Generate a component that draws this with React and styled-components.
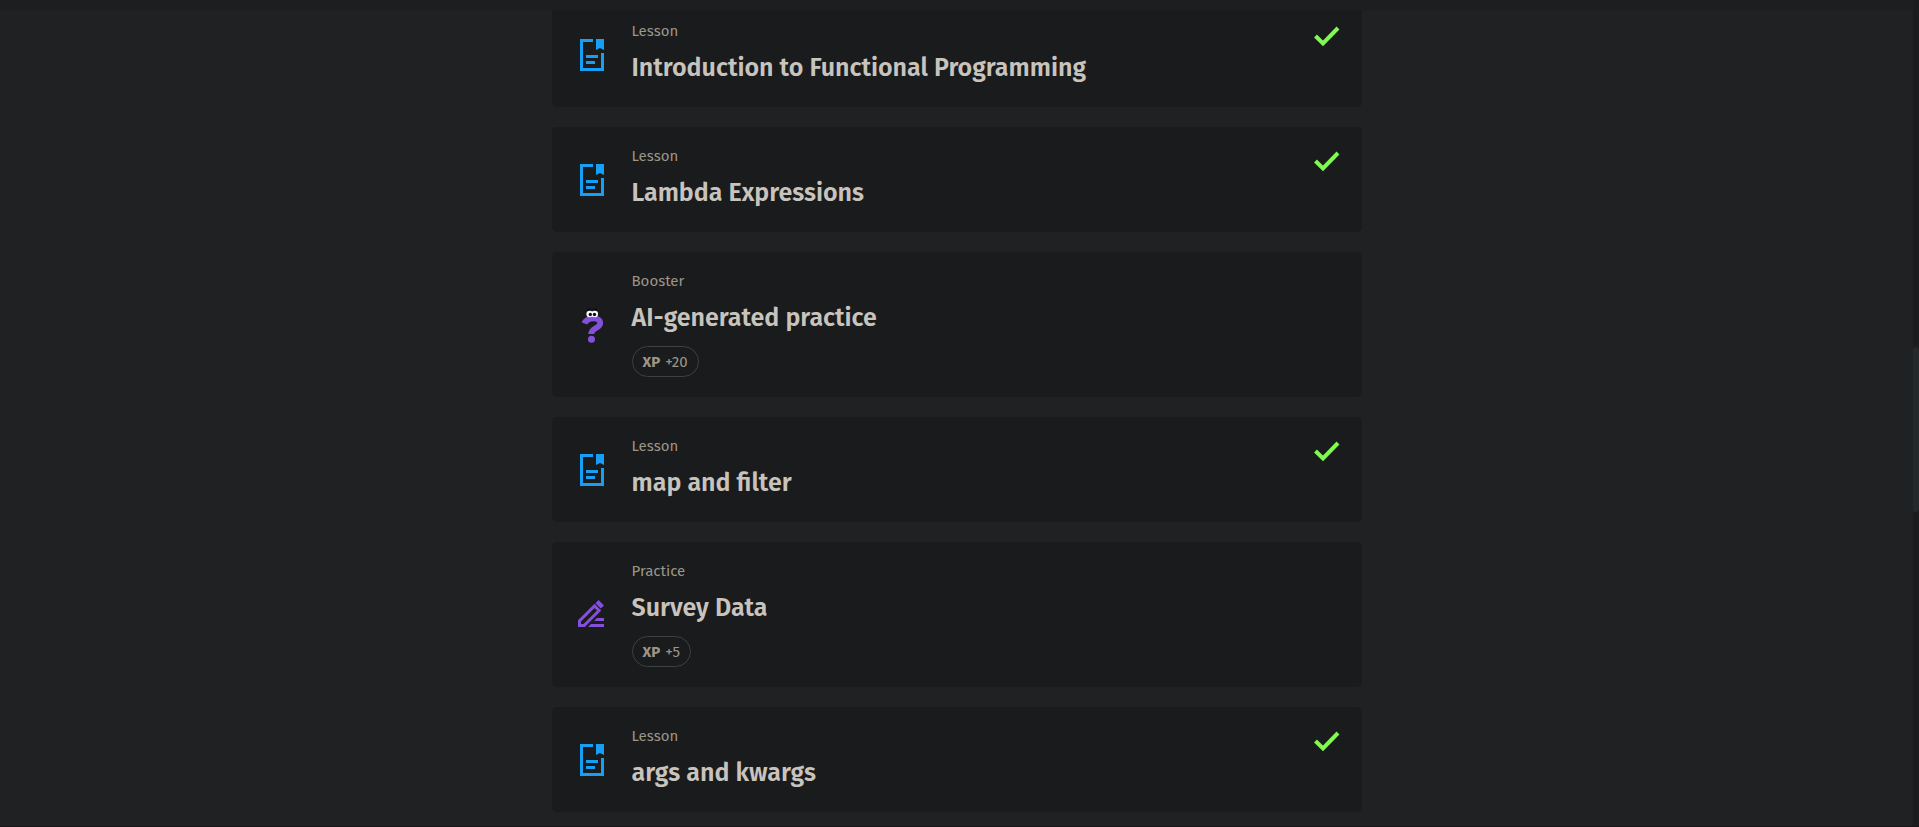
import React from "react";
import styled, { createGlobalStyle } from "styled-components";

const GlobalStyle = createGlobalStyle`
  * { box-sizing: border-box; }
  html, body, #root { height: 100%; }
  body {
    margin: 0;
    overflow: hidden;
    background: #1f2123;
    color: #c8c3bc;
    font-family: "Fira Sans", "Noto Sans", sans-serif;
  }
`;

const Page = styled.div`
  position: relative;
  height: 100vh;
  overflow: hidden;
  border-bottom: 1px solid #181516;
`;

const TopBar = styled.header`
  position: absolute;
  inset: 0 0 auto 0;
  height: 10px;
  background: #1c1e1f;
`;

const ScrollTrack = styled.div`
  position: absolute;
  inset: 0 0 0 auto;
  width: 6px;
  background: #1a1c1d;
`;

const ScrollThumb = styled.div`
  position: absolute;
  top: 42%;
  width: 100%;
  height: 20%;
  border-radius: 3px;
  background: #25292b;
`;

const ScrollArea = styled.div`
  padding-right: 6px;
`;

const LessonList = styled.main`
  display: flex;
  flex-direction: column;
  gap: 20px;
  width: 100%;
  max-width: 810px;
  margin: 0 auto;
  padding-top: 2px;
`;

const Card = styled.article`
  display: flex;
  align-items: center;
  gap: 22px;
  padding: 20px 22px;
  border-radius: 5px;
  background: #191b1c;
`;

const IconBox = styled.div`
  display: flex;
  flex: none;
  width: 36px;
  height: 36px;

  svg { overflow: visible; }
`;

const Body = styled.div`
  flex: 1;
  display: flex;
  flex-direction: column;
  align-items: flex-start;
`;

const Kind = styled.div`
  margin-bottom: 10px;
  color: #9e9589;
  font-size: 15px;
  line-height: 18px;
`;

const Title = styled.h2`
  margin: 0;
  font-size: 25px;
  font-weight: 600;
  line-height: 37px;
`;

const XpBadge = styled.div`
  display: flex;
  align-items: center;
  gap: 5px;
  height: 31px;
  margin-top: 9px;
  padding: 0 10px;
  border: 1px solid #3c4144;
  border-radius: 16px;
  color: #9e9589;
  font-size: 15px;
`;

const Done = styled.div`
  display: flex;
  align-self: flex-start;
  width: 26px;
`;

const LessonIcon = () => (
  <svg width="36" height="36" viewBox="0 0 36 36" aria-hidden="true">
    <path fill="#169ff5" d="M6 2h13v3H9v26h18V16h3v18H6z" />
    <path fill="#169ff5" d="M22 2h8v11l-4-2-4 2z" />
    <path fill="#169ff5" d="M12 18h12v3H12zM12 24h9v3h-9z" />
  </svg>
);

const PencilIcon = () => (
  <svg width="36" height="36" viewBox="0 0 36 36" aria-hidden="true">
    <path fill="none" stroke="#8450da" strokeWidth="3" d="M5.500 28.500v-4.600L20.500 8.900l4.600 4.600L10.100 28.500z" />
    <path fill="#8450da" d="M24.600 3l5.400 5.400-3.200 3.200-5.400-5.400zM23 21h7v3H20zM17 27h13v3H14z" />
  </svg>
);

const BoosterIcon = () => (
  <svg width="36" height="36" viewBox="0 0 36 36" aria-hidden="true">
    <path fill="none" stroke="#8450da" strokeWidth="5.800" d="M10.500 16.500c2.500-6.500 15.700-7 15.700-.5 0 6-8.900 4-8.900 11" />
    <circle cx="17.500" cy="32.300" r="3.500" fill="#8450da" />
    <path fill="none" stroke="#080b26" strokeWidth="1.500" d="M13 3.500l3.500-2M19.500 2l3.500.5" />
    <circle cx="15.700" cy="7" r="3.300" fill="#fff" />
    <circle cx="20.700" cy="7" r="3.300" fill="#fff" />
    <circle cx="16.300" cy="7.500" r="1.700" fill="#080b26" />
    <circle cx="20.500" cy="7.500" r="1.700" fill="#080b26" />
  </svg>
);

const CheckIcon = () => (
  <svg width="26" height="36" viewBox="0 0 26 36" role="img" aria-label="Completed">
    <path fill="none" stroke="#80f950" strokeWidth="4" d="M1.500 14l7.500 7.500L24 6" />
  </svg>
);

const icons = { Lesson: LessonIcon, Booster: BoosterIcon, Practice: PencilIcon };

const items = [
  { kind: "Lesson", title: "Introduction to Functional Programming", done: true },
  { kind: "Lesson", title: "Lambda Expressions", done: true },
  { kind: "Booster", title: "AI-generated practice", xp: 20 },
  { kind: "Lesson", title: "map and filter", done: true },
  { kind: "Practice", title: "Survey Data", xp: 5 },
  { kind: "Lesson", title: "args and kwargs", done: true },
];

function LessonCard({ kind, title, xp, done }) {
  const Icon = icons[kind];
  return (
    <Card>
      <IconBox><Icon /></IconBox>
      <Body>
        <Kind>{kind}</Kind>
        <Title>{title}</Title>
        {xp && <XpBadge><strong>XP</strong><span>+{xp}</span></XpBadge>}
      </Body>
      {done && <Done><CheckIcon /></Done>}
    </Card>
  );
}

export default function App() {
  return (
    <Page>
      <GlobalStyle />
      <ScrollArea>
        <LessonList>
          {items.map((item) => <LessonCard key={item.title} {...item} />)}
        </LessonList>
      </ScrollArea>
      <TopBar />
      <ScrollTrack><ScrollThumb /></ScrollTrack>
    </Page>
  );
}
